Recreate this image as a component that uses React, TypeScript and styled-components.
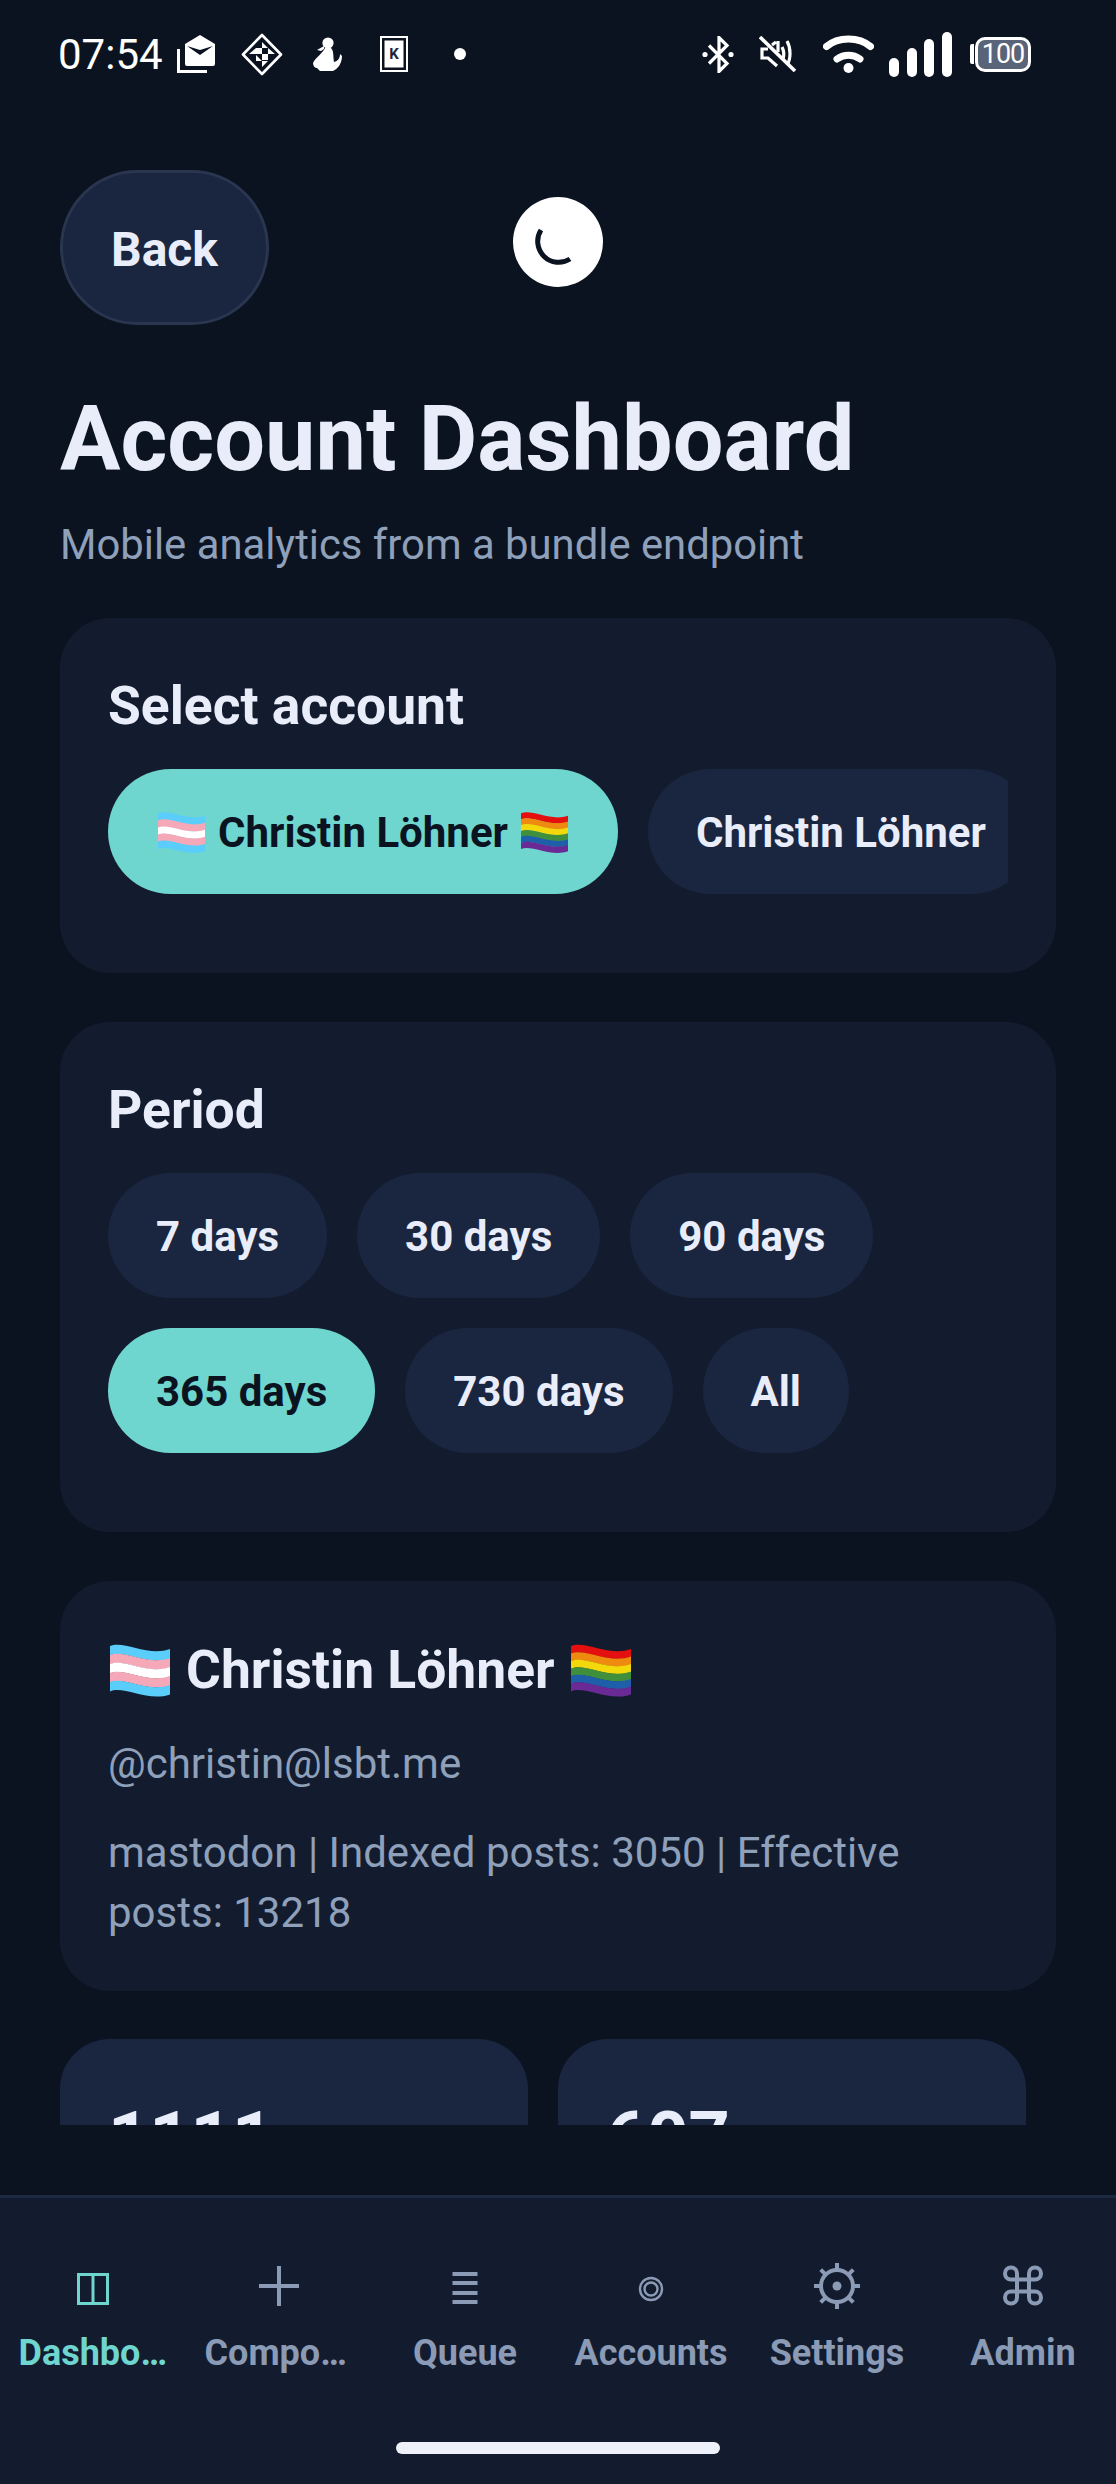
import React from "react";
import styled, { createGlobalStyle } from "styled-components";

const GlobalStyle = createGlobalStyle`
  html, body {
    margin: 0;
    padding: 0;
    background: #0b1320;
    font-family: Roboto, "Liberation Sans", sans-serif;
  }
  * {
    box-sizing: border-box;
  }
`;

const Screen = styled.div`
  position: relative;
  width: 1116px;
  height: 2484px;
  display: flex;
  flex-direction: column;
  overflow: hidden;
  background: #0b1320;
`;

const StatusBar = styled.div`
  height: 108px;
  flex-shrink: 0;
  display: flex;
  align-items: center;
  justify-content: space-between;
  padding: 0 85px 0 58px;
  color: #ffffff;
`;

const StatusLeft = styled.div`
  display: flex;
  align-items: center;
`;

const StatusRight = styled.div`
  display: flex;
  align-items: center;
`;

const Clock = styled.span`
  font-size: 42px;
  font-weight: 400;
  margin-right: 14px;
`;

const Notification = styled.svg<{ $gap?: number }>`
  display: block;
  margin-right: ${({ $gap }) => $gap ?? 0}px;
  flex-shrink: 0;
`;

const BatteryNub = styled.div`
  width: 4px;
  height: 20px;
  background: #ffffff;
  border-radius: 2px 0 0 2px;
  margin-right: 1px;
`;

const BatteryBody = styled.div`
  width: 56px;
  height: 35px;
  border: 3px solid #ffffff;
  border-radius: 10px;
  background: #5a6478;
  color: #ffffff;
  font-size: 27px;
  line-height: 29px;
  text-align: center;
  letter-spacing: -1px;
`;

const Scroll = styled.div`
  height: 2017px;
  flex-shrink: 0;
  overflow: hidden;
  padding: 62px 60px 0;
`;

const BackButton = styled.button`
  display: block;
  width: 209px;
  height: 155px;
  border: 3px solid #2a3650;
  border-radius: 78px;
  background: #1a2640;
  color: #e9edfa;
  font-family: inherit;
  font-size: 48px;
  font-weight: 700;
  padding: 3px 0 0;
`;

const Spinner = styled.div`
  position: absolute;
  left: 513px;
  top: 197px;
  width: 90px;
  height: 90px;
  border-radius: 50%;
  background: #ffffff;
  display: flex;
  align-items: center;
  justify-content: center;
`;

const Title = styled.h1`
  margin: 65px 0 0;
  font-size: 90px;
  line-height: 100px;
  font-weight: 700;
  color: #e9edfa;
`;

const Subtitle = styled.p`
  margin: 25px 0 0;
  font-size: 41.8px;
  line-height: 60px;
  color: #8fa0bb;
`;

const Card = styled.section<{ $first?: boolean }>`
  margin-top: ${({ $first }) => ($first ? 43 : 49)}px;
  padding: 48px;
  background: #131c2e;
  border-radius: 50px;
`;

const CardTitle = styled.h2`
  margin: 0 0 25px;
  padding-top: 2px;
  font-size: 53.4px;
  line-height: 76px;
  font-weight: 700;
  color: #e9edfa;
`;

const ChipScroller = styled.div`
  display: flex;
  gap: 30px;
  overflow: hidden;
  padding-bottom: 31px;
`;

const ChipWrap = styled.div`
  display: flex;
  flex-wrap: wrap;
  gap: 30px;
  padding-bottom: 31px;
`;

const Chip = styled.div<{ $active?: boolean }>`
  flex-shrink: 0;
  height: 125px;
  padding: 2px 48px 0;
  display: inline-flex;
  align-items: center;
  gap: 12px;
  border-radius: 63px;
  background: ${({ $active }) => ($active ? "#6fd5cf" : "#1a2640")};
  color: ${({ $active }) => ($active ? "#0b1320" : "#e9edfa")};
  font-size: 42px;
  font-weight: 700;
  white-space: nowrap;
`;

const AccountName = styled.h2`
  margin: 0 0 26px;
  padding-top: 3px;
  display: flex;
  align-items: center;
  gap: 15px;
  font-size: 53.4px;
  line-height: 76px;
  font-weight: 700;
  color: #e9edfa;
`;

const Handle = styled.p`
  margin: 0 0 29px;
  font-size: 42px;
  line-height: 60px;
  color: #8fa0bb;
`;

const Meta = styled.p`
  margin: 0;
  font-size: 42px;
  line-height: 60px;
  color: #8fa0bb;
`;

const StatGrid = styled.div`
  margin-top: 48px;
  display: flex;
  flex-wrap: wrap;
  gap: 30px;
`;

const StatTile = styled.div`
  width: 468px;
  height: 240px;
  padding: 48px;
  border-radius: 50px;
  background: #1a2640;
`;

const StatValue = styled.div`
  font-size: 72px;
  line-height: 104px;
  font-weight: 700;
  color: #e9edfa;
`;

const Nav = styled.nav`
  margin-top: auto;
  height: 289px;
  flex-shrink: 0;
  border-top: 3px solid #1c2940;
  background: #131c2e;
  padding-top: 59px;
  display: flex;
  flex-direction: column;
  align-items: center;
`;

const NavRow = styled.div`
  width: 100%;
  display: grid;
  grid-template-columns: repeat(6, 1fr);
`;

const NavItem = styled.div<{ $active?: boolean }>`
  display: flex;
  flex-direction: column;
  align-items: center;
  color: ${({ $active }) => ($active ? "#6fd5cf" : "#8b9ab5")};
`;

const NavIcon = styled.svg`
  display: block;
  width: 60px;
  height: 60px;
`;

const NavLabel = styled.span<{ $narrow?: boolean }>`
  display: block;
  max-width: ${({ $narrow }) => ($narrow ? 149 : 154)}px;
  margin-top: 14px;
  font-size: 36px;
  line-height: 44px;
  font-weight: 700;
  white-space: nowrap;
  overflow: hidden;
  text-overflow: ellipsis;
`;

const HomeIndicator = styled.div`
  width: 324px;
  height: 12px;
  margin-top: 67px;
  border-radius: 6px;
  background: #eef1f9;
`;

const FlagIcon = styled.svg`
  display: block;
  flex-shrink: 0;
  margin: 0 1.5px;
`;

const TRANS = ["#5bcdfa", "#f5a9b8", "#ffffff", "#f5a9b8", "#5bcdfa"];
const PRIDE = ["#e40f0f", "#ee8a10", "#f3d90c", "#3f8f3c", "#1f5ea8", "#6a2a96"];

const Flag = ({ colors, size, label }: { colors: string[]; size: number; label: string }) => {
  const band = 45 / colors.length;
  return (
    <FlagIcon width={size} height={(size * 54) / 60} viewBox="0 0 60 54" role="img" aria-label={label}>
      {colors.map((color, i) => {
        const y = 2 + i * band;
        const h = band + 0.4;
        return (
          <path
            key={i}
            fill={color}
            d={`M0 ${y + 1}C14 ${y - 5} 38 ${y + 12} 60 ${y + 4}V${y + h + 4}C38 ${y + h + 12} 14 ${y + h - 5} 0 ${y + h + 1}Z`}
          />
        );
      })}
    </FlagIcon>
  );
};

const NAV_ITEMS = [
  {
    label: "Dashboard",
    narrow: true,
    icon: (
      <g fill="none" stroke="currentColor" strokeWidth="3">
        <rect x="15.5" y="17.5" width="29" height="29" />
        <path d="M30 17v30" />
      </g>
    ),
  },
  {
    label: "Components",
    narrow: true,
    icon: <path d="M10 29h40M30 9v40" fill="none" stroke="currentColor" strokeWidth="4" />,
  },
  {
    label: "Queue",
    icon: <path d="M17.5 17h25M17.5 26h25M17.5 36h25M17.5 45h25" fill="none" stroke="currentColor" strokeWidth="4" />,
  },
  {
    label: "Accounts",
    icon: (
      <g fill="none" stroke="currentColor" strokeWidth="2.4">
        <circle cx="30" cy="32" r="11" />
        <circle cx="30" cy="32" r="6.5" />
      </g>
    ),
  },
  {
    label: "Settings",
    icon: (
      <g>
        <circle cx="30" cy="29" r="16" fill="none" stroke="currentColor" strokeWidth="4" />
        <circle cx="30" cy="29" r="4.5" fill="currentColor" />
        <path
          d="M30 6v7M30 45v7M7 29h7M46 29h7M13.7 12.7l5 5M41.3 40.3l5 5M46.3 12.7l-5 5M18.7 40.3l-5 5"
          stroke="currentColor"
          strokeWidth="4"
        />
      </g>
    ),
  },
  {
    label: "Admin",
    icon: (
      <path
        fill="none"
        stroke="currentColor"
        strokeWidth="4"
        d="M24 23h12v12H24zM24 23v-6a6 6 0 1 0-6 6h6M36 23v-6a6 6 0 1 1 6 6h-6M24 35v6a6 6 0 1 1-6-6h6M36 35v6a6 6 0 1 0 6-6h-6"
        transform="translate(0 -0.5)"
      />
    ),
  },
];

export default function App() {
  return (
    <Screen>
      <GlobalStyle />
      <StatusBar>
        <StatusLeft>
          <Clock>07:54</Clock>
          <Notification width="38" height="38" viewBox="0 0 38 38" $gap={26}>
            <path d="M1.5 14v22.5H30" fill="none" stroke="#fff" strokeWidth="3" />
            <path d="M23 0l15 9v20a2 2 0 0 1-2 2H10a2 2 0 0 1-2-2V9z" fill="#fff" />
            <path d="M10 11l13 9 13-9-13 4z" fill="#0b1320" />
          </Notification>
          <Notification width="42" height="43" viewBox="0 0 42 43" $gap={30}>
            <path d="M21 2l19 19.5L21 41 2 21.5z" fill="none" stroke="#fff" strokeWidth="2.6" strokeLinejoin="round" />
            <path d="M21 9l6 6h-6zM15 15h6v6h-6zM27 15l7 6h-7zM21 21h6v6h-6zM15 22v6h6zM8 21l7-6v6zM21 28h6l-6 6zM27 27l7-5-7 5z" fill="#fff" />
          </Notification>
          <Notification width="29" height="34" viewBox="0 0 29 34" $gap={38}>
            <circle cx="15" cy="6" r="5.6" fill="#fff" />
            <path d="M11 9L4 13l4 1 3-2zM12 11c-2 5-9 9-12 15 0 3 2 5 4 5l3 3h13c5-2 9-8 9-15l-2-2c0 4-2 7-6 8-1-6 0-11-3-14z" fill="#fff" />
          </Notification>
          <Notification width="28" height="36" viewBox="0 0 28 36" $gap={46}>
            <rect x="1" y="1" width="26" height="34" fill="none" stroke="#fff" strokeWidth="2" />
            <rect x="4.5" y="4.5" width="19" height="27" fill="#fff" />
            <text x="14" y="23" textAnchor="middle" fontSize="15" fontWeight="700" fontFamily="Roboto, sans-serif" fill="#1a2640">
              K
            </text>
          </Notification>
          <Notification width="12" height="12" viewBox="0 0 12 12">
            <circle cx="6" cy="6" r="6" fill="#fff" />
          </Notification>
        </StatusLeft>
        <StatusRight>
          <Notification width="32" height="37" viewBox="0 0 32 37" $gap={25} fill="none" stroke="#fff" strokeWidth="3.2">
            <path d="M7 9.5l18 18-8 8V1.5l8 8-18 18" />
            <circle cx="3" cy="18.5" r="2.6" fill="#fff" stroke="none" />
            <circle cx="29" cy="18.5" r="2.6" fill="#fff" stroke="none" />
          </Notification>
          <Notification width="38" height="36" viewBox="0 0 38 36" $gap={26} fill="none" stroke="#fff" strokeWidth="3.2">
            <path d="M1 1l35 34" strokeWidth="3.6" />
            <path d="M9 13H3v9h6l9 8" />
            <path d="M17 6l-4 3M19 16V5" />
            <path d="M23 11c2 4 2 9 1 12M28 5c4 7 4 18 0 24" />
          </Notification>
          <Notification width="51" height="38" viewBox="0 0 51 38" $gap={15} fill="none" stroke="#fff" strokeLinecap="round">
            <path d="M3.5 11.5C15 1.5 36 1.5 47.5 11.5" strokeWidth="7" />
            <path d="M14 24c7-5 16-5 23 0" strokeWidth="7" />
            <circle cx="25.5" cy="33" r="5" fill="#fff" stroke="none" />
          </Notification>
          <Notification width="63" height="45" viewBox="0 0 63 45" $gap={18} fill="#fff">
            <rect x="0" y="26" width="10" height="19" rx="5" />
            <rect x="18" y="16" width="10" height="29" rx="5" />
            <rect x="35" y="7" width="10" height="38" rx="5" />
            <rect x="53" y="0" width="10" height="45" rx="5" />
          </Notification>
          <BatteryNub />
          <BatteryBody>100</BatteryBody>
        </StatusRight>
      </StatusBar>

      <Scroll>
        <BackButton>Back</BackButton>
        <Title>Account Dashboard</Title>
        <Subtitle>Mobile analytics from a bundle endpoint</Subtitle>

        <Card $first>
          <CardTitle>Select account</CardTitle>
          <ChipScroller>
            <Chip $active>
              <Flag colors={TRANS} size={47} label="transgender flag" />
              Christin Löhner
              <Flag colors={PRIDE} size={47} label="rainbow flag" />
            </Chip>
            <Chip>Christin Löhner</Chip>
          </ChipScroller>
        </Card>

        <Card>
          <CardTitle>Period</CardTitle>
          <ChipWrap>
            <Chip>7 days</Chip>
            <Chip>30 days</Chip>
            <Chip>90 days</Chip>
            <Chip $active>365 days</Chip>
            <Chip>730 days</Chip>
            <Chip>All</Chip>
          </ChipWrap>
        </Card>

        <Card>
          <AccountName>
            <Flag colors={TRANS} size={60} label="transgender flag" />
            Christin Löhner
            <Flag colors={PRIDE} size={60} label="rainbow flag" />
          </AccountName>
          <Handle>@christin@lsbt.me</Handle>
          <Meta>mastodon | Indexed posts: 3050 | Effective posts: 13218</Meta>
        </Card>

        <StatGrid>
          <StatTile>
            <StatValue>1111</StatValue>
          </StatTile>
          <StatTile>
            <StatValue>607</StatValue>
          </StatTile>
        </StatGrid>
      </Scroll>

      <Spinner>
        <svg width="50" height="50" viewBox="0 0 50 50">
          <path d="M8 13A21 21 0 0 0 37 42" fill="none" stroke="#0b1320" strokeWidth="5" />
        </svg>
      </Spinner>

      <Nav>
        <NavRow>
          {NAV_ITEMS.map((item, i) => (
            <NavItem key={item.label} $active={i === 0}>
              <NavIcon viewBox="0 0 60 60">{item.icon}</NavIcon>
              <NavLabel $narrow={item.narrow}>{item.label}</NavLabel>
            </NavItem>
          ))}
        </NavRow>
        <HomeIndicator />
      </Nav>
    </Screen>
  );
}
